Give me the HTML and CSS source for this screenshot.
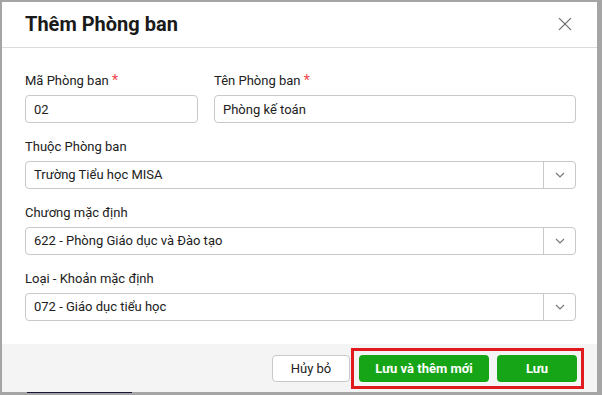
FILE: index.html
```html
<!DOCTYPE html>
<html lang="vi">
<head>
    <meta charset="UTF-8">
    <meta name="viewport" content="width=device-width, initial-scale=1.0">
    <title>Thêm Phòng ban</title>
    <link rel="stylesheet" href="styles.css">
</head>
<body>
    <div class="dialog">
        <div class="dialog-header">
            <h2>Thêm Phòng ban</h2>
            <button class="close-btn" title="Đóng">
                <svg viewBox="0 0 16 16" fill="none" stroke="currentColor" stroke-width="1.4" stroke-linecap="round">
                    <line x1="1.5" y1="1.5" x2="14.5" y2="14.5"></line>
                    <line x1="14.5" y1="1.5" x2="1.5" y2="14.5"></line>
                </svg>
            </button>
        </div>

        <div class="dialog-body">
            <div class="form-row">
                <div class="field field-code">
                    <label>Mã Phòng ban <span class="required">*</span></label>
                    <input type="text" class="text-input" value="02">
                </div>
                <div class="field field-name">
                    <label>Tên Phòng ban <span class="required">*</span></label>
                    <input type="text" class="text-input" value="Phòng kế toán">
                </div>
            </div>

            <div class="field">
                <label>Thuộc Phòng ban</label>
                <div class="combo">
                    <span class="combo-value">Trường Tiểu học MISA</span>
                    <span class="combo-arrow">
                        <svg viewBox="0 0 10 6" fill="none" stroke="currentColor" stroke-width="1.2">
                            <polyline points="1 1 5 5 9 1"></polyline>
                        </svg>
                    </span>
                </div>
            </div>

            <div class="field">
                <label>Chương mặc định</label>
                <div class="combo">
                    <span class="combo-value">622 - Phòng Giáo dục và Đào tạo</span>
                    <span class="combo-arrow">
                        <svg viewBox="0 0 10 6" fill="none" stroke="currentColor" stroke-width="1.2">
                            <polyline points="1 1 5 5 9 1"></polyline>
                        </svg>
                    </span>
                </div>
            </div>

            <div class="field">
                <label>Loại - Khoản mặc định</label>
                <div class="combo">
                    <span class="combo-value">072 - Giáo dục tiểu học</span>
                    <span class="combo-arrow">
                        <svg viewBox="0 0 10 6" fill="none" stroke="currentColor" stroke-width="1.2">
                            <polyline points="1 1 5 5 9 1"></polyline>
                        </svg>
                    </span>
                </div>
            </div>
        </div>

        <div class="dialog-footer">
            <button class="btn btn-cancel">Hủy bỏ</button>
            <div class="highlight">
                <button class="btn btn-primary btn-save-new">Lưu và thêm mới</button>
                <button class="btn btn-primary btn-save">Lưu</button>
            </div>
        </div>
    </div>
    <div class="taskbar-line"></div>
</body>
</html>
```

FILE: styles.css
```css
:root {
    --text-color: #212121;
    --label-color: #212121;
    --border-color: #c9c9c9;
    --green: #16a516;
    --footer-bg: #f4f4f4;
}

* {
    margin: 0;
    padding: 0;
    box-sizing: border-box;
    font-family: Roboto, "Liberation Sans", Arial, sans-serif;
}

body {
    width: 602px;
    height: 395px;
    background-color: #a5a5a5;
    padding: 2px 5px 0 2px;
    overflow: hidden;
}

.dialog {
    background-color: #ffffff;
    width: 595px;
    height: 390px;
    display: flex;
    flex-direction: column;
}

.dialog-header {
    height: 46px;
    border-bottom: 1px solid #dcdcdc;
    display: flex;
    align-items: center;
    justify-content: space-between;
    padding: 0 25px 0 23px;
    flex-shrink: 0;
}

.dialog-header h2 {
    font-size: 20px;
    font-weight: 700;
    color: #1a1a1a;
    margin-top: -2px;
}

.close-btn {
    background: none;
    border: none;
    color: #6b6b6b;
    width: 14px;
    height: 14px;
    display: flex;
    cursor: pointer;
    margin-top: -1px;
}

.close-btn svg {
    width: 14px;
    height: 14px;
}

.dialog-body {
    flex: 1;
    padding: 24px 21px 0 23px;
}

.form-row {
    display: flex;
    gap: 16px;
}

.field {
    display: flex;
    flex-direction: column;
    margin-bottom: 16px;
}

.field-code {
    width: 173px;
}

.field-name {
    flex: 1;
}

.field label {
    font-size: 13px;
    line-height: 16px;
    color: var(--label-color);
    margin-bottom: 6px;
}

.required {
    color: #f0474a;
    font-size: 14px;
}

.text-input {
    height: 28px;
    border: 1px solid var(--border-color);
    border-radius: 4px;
    padding: 0 8px;
    font-size: 13px;
    color: var(--text-color);
    outline: none;
    width: 100%;
}

.combo {
    height: 28px;
    border: 1px solid var(--border-color);
    border-radius: 4px;
    display: flex;
    align-items: stretch;
}

.combo-value {
    flex: 1;
    padding: 0 8px;
    font-size: 13px;
    line-height: 26px;
    color: var(--text-color);
}

.combo-arrow {
    width: 32px;
    border-left: 1px solid var(--border-color);
    display: flex;
    align-items: center;
    justify-content: center;
    color: #777777;
}

.combo-arrow svg {
    width: 10px;
    height: 6px;
}

.dialog-footer {
    height: 48px;
    background-color: var(--footer-bg);
    display: flex;
    align-items: center;
    justify-content: flex-end;
    gap: 1px;
    padding-right: 13px;
    flex-shrink: 0;
}

.btn {
    height: 27px;
    border-radius: 4px;
    font-size: 13px;
    cursor: pointer;
}

.btn-cancel {
    width: 78px;
    background-color: #ffffff;
    border: 1px solid var(--border-color);
    color: var(--text-color);
}

.highlight {
    display: flex;
    gap: 8px;
    border: 3px solid #e01a1f;
    padding: 4px 4px 4px 5px;
}

.btn-primary {
    background-color: var(--green);
    border: none;
    color: #ffffff;
    font-weight: 700;
}

.btn-save-new {
    width: 130px;
}

.btn-save {
    width: 80px;
}

.taskbar-line {
    width: 105px;
    height: 1px;
    margin-left: 25px;
    background-color: #16163a;
}
```
